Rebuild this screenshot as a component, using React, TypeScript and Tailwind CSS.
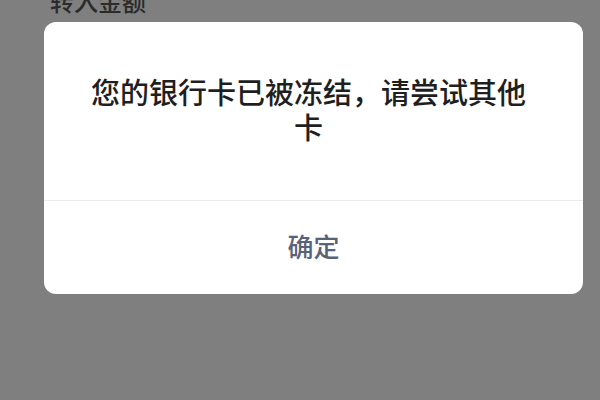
export default function App() {
  return (
    <div className="h-[400px] w-[600px] overflow-hidden bg-[#7f7f7f] font-['Noto_Sans_CJK_SC',sans-serif]">
      <div className="ml-[50px] mt-[-11px] text-[24px] font-medium leading-[24px] text-[#2b2b2b]">转入金额</div>

      <div className="ml-[44px] mt-[9px] w-[539px] overflow-hidden rounded-[12px] bg-white">
        <div className="flex h-[178px] items-start justify-center pl-[40px] pr-[50px] pt-[52px]">
          <p className="text-center text-[29px] font-medium leading-[35px] text-[#1f1f1f]">
            您的银行卡已被冻结，请尝试其他卡
          </p>
        </div>
        <div className="h-px bg-[#ececec]" />
        <div className="flex h-[93px] items-center justify-center pb-[4px]">
          <span className="text-[26px] font-medium leading-[30px] text-[#586278]">确定</span>
        </div>
      </div>
    </div>
  );
}
